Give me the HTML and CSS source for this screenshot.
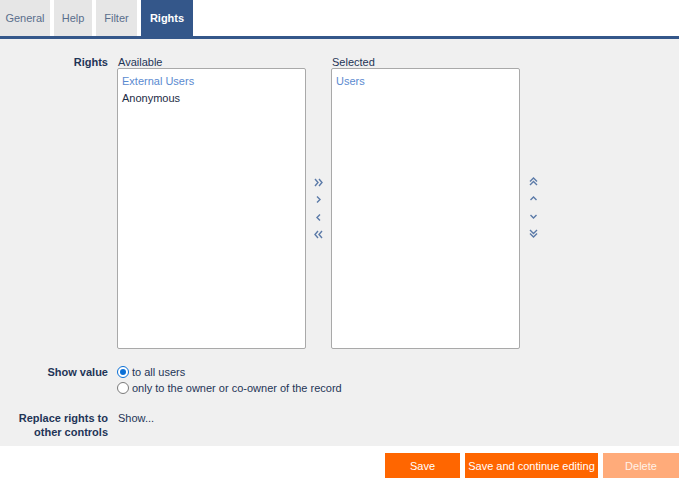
FILE: index.html
```html
<!DOCTYPE html>
<html>
<head>
<meta charset="utf-8">
<link rel="stylesheet" href="styles.css">
</head>
<body>
<div class="page">
  <div class="tabs">
    <div class="tab t1">General</div>
    <div class="tab t2">Help</div>
    <div class="tab t3">Filter</div>
    <div class="tab active">Rights</div>
  </div>
  <div class="panel">
    <div class="row rights-row">
      <div class="label">Rights</div>
      <div class="picker">
        <div class="col">
          <div class="caption">Available</div>
          <div class="listbox">
            <div class="item group">External Users</div>
            <div class="item">Anonymous</div>
          </div>
        </div>
        <div class="arrows">
          <svg width="9" height="9" viewBox="0 0 9 9"><path d="M1 1 L4 4.5 L1 8 M5 1 L8 4.5 L5 8" fill="none" stroke="#5b7aa8" stroke-width="1.4"/></svg>
          <svg width="9" height="9" viewBox="0 0 9 9"><path d="M3 1.5 L6 4.5 L3 7.5" fill="none" stroke="#5b7aa8" stroke-width="1.4"/></svg>
          <svg width="9" height="9" viewBox="0 0 9 9"><path d="M6 1.5 L3 4.5 L6 7.5" fill="none" stroke="#5b7aa8" stroke-width="1.4"/></svg>
          <svg width="9" height="9" viewBox="0 0 9 9"><path d="M4 1 L1 4.5 L4 8 M8 1 L5 4.5 L8 8" fill="none" stroke="#5b7aa8" stroke-width="1.4"/></svg>
        </div>
        <div class="col">
          <div class="caption">Selected</div>
          <div class="listbox">
            <div class="item group">Users</div>
          </div>
        </div>
        <div class="arrows order">
          <svg width="9" height="9" viewBox="0 0 9 9"><path d="M1 4.5 L4.5 1 L8 4.5 M1 8 L4.5 4.5 L8 8" fill="none" stroke="#5b7aa8" stroke-width="1.4"/></svg>
          <svg width="9" height="9" viewBox="0 0 9 9"><path d="M1.5 6 L4.5 3 L7.5 6" fill="none" stroke="#5b7aa8" stroke-width="1.4"/></svg>
          <svg width="9" height="9" viewBox="0 0 9 9"><path d="M1.5 3 L4.5 6 L7.5 3" fill="none" stroke="#5b7aa8" stroke-width="1.4"/></svg>
          <svg width="9" height="9" viewBox="0 0 9 9"><path d="M1 1 L4.5 4.5 L8 1 M1 4.5 L4.5 8 L8 4.5" fill="none" stroke="#5b7aa8" stroke-width="1.4"/></svg>
        </div>
      </div>
    </div>
    <div class="row show-row">
      <div class="label">Show value</div>
      <div class="radios">
        <label class="radio"><span class="dot checked"></span>to all users</label>
        <label class="radio"><span class="dot"></span>only to the owner or co-owner of the record</label>
      </div>
    </div>
    <div class="row replace-row">
      <div class="label">Replace rights to<br>other controls</div>
      <div class="value">Show...</div>
    </div>
  </div>
  <div class="buttons">
    <button class="btn">Save</button>
    <button class="btn wide">Save and continue editing</button>
    <button class="btn disabled">Delete</button>
  </div>
</div>
</body>
</html>
```

FILE: styles.css
```css
* { box-sizing: border-box; }
html, body { margin: 0; padding: 0; background: #fff; }
body {
  font-family: "Liberation Sans", Arial, sans-serif;
  font-size: 11px;
  color: #1f3557;
}
.page { width: 680px; height: 478px; overflow: hidden; }
.tabs { display: flex; height: 36px; gap: 4px; }
.tab {
  background: #e6e6e6;
  color: #5a6e8c;
  line-height: 36px;
  text-align: center;
}
.t1 { width: 50px; }
.t2 { width: 38px; }
.t3 { width: 41px; }
.tab.active { background: #34578a; color: #fff; font-weight: bold; width: 52px; }
.panel {
  border-top: 3px solid #34578a;
  background: #f0f0f0;
  width: 679px;
  height: 410px;
  padding-top: 15px;
}
.row { display: flex; }
.label {
  width: 108px;
  text-align: right;
  font-weight: bold;
  color: #1f3557;
  line-height: 16px;
}
.picker { display: flex; margin-left: 9px; }
.col { display: flex; flex-direction: column; }
.caption { line-height: 16px; height: 14px; color: #1f3557; padding-left: 1px; }
.listbox {
  width: 189px;
  height: 281px;
  background: #fff;
  border: 1px solid #a9a9a9;
  border-radius: 2px;
  padding: 4px 4px;
}
.item { line-height: 17px; color: #1d2b45; }
.item.group { color: #5b8ad0; }
.arrows {
  width: 25px;
  display: flex;
  flex-direction: column;
  justify-content: center;
  align-items: center;
  padding-top: 14px;
  gap: 8.5px;
}
.arrows.order { width: 27px; padding-top: 12px; }
.show-row { margin-top: 15px; }
.radios { margin-left: 9px; display: flex; flex-direction: column; }
.radio { display: flex; align-items: center; line-height: 16px; color: #1f3557; }
.dot {
  width: 12px; height: 12px; border-radius: 50%;
  border: 1px solid #7a7a7a; background: #fff;
  margin-right: 3px; display: inline-block; position: relative;
}
.dot.checked { border-color: #0a6fd6; }
.dot.checked::after {
  content: ""; position: absolute; left: 2px; top: 2px;
  width: 6px; height: 6px; border-radius: 50%; background: #0a6fd6;
}
.replace-row { margin-top: 15px; }
.replace-row .label { line-height: 14px; }
.value { margin-left: 10px; line-height: 14px; color: #1f3557; }
.buttons { display: flex; justify-content: flex-end; gap: 5px; margin-top: 7px; padding-right: 1px; }
.btn {
  font-family: inherit; font-size: 11px; color: #fff;
  background: #ff6600; border: none; height: 25px; width: 75px; padding: 0;
  white-space: nowrap;
}
.btn.wide { width: 133px; }
.btn.disabled { background: #ffab7a; color: #fff2e8; width: 76px; }
```
